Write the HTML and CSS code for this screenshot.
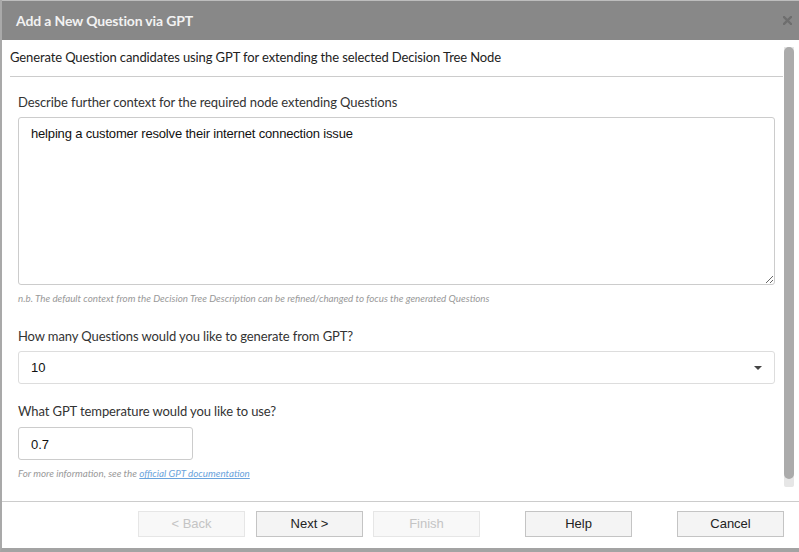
FILE: index.html
```html
<!DOCTYPE html>
<html>
<head>
<link rel="stylesheet" href="styles.css">
</head>
<body>

<div class="dialog">
  <div class="dialog-title">
    <span class="title-text">Add a New Question via GPT</span>
    <svg class="close-icon" width="9" height="9" viewBox="0 0 9 9">
      <path d="M1 1 L8 8 M8 1 L1 8" stroke="#6e6e6e" stroke-width="2.4" stroke-linecap="square"/>
    </svg>
  </div>

  <div class="dialog-main">
    <div class="dialog-content">
      <div class="step-header">Generate Question candidates using GPT for extending the selected Decision Tree Node</div>

      <div class="form">
        <div class="field-label first">Describe further context for the required node extending Questions</div>
        <textarea class="context-box">helping a customer resolve their internet connection issue</textarea>
        <div class="hint">n.b. The default context from the Decision Tree Description can be refined/changed to focus the generated Questions</div>

        <div class="field-label">How many Questions would you like to generate from GPT?</div>
        <div class="select-box">
          <span>10</span>
          <span class="caret"></span>
        </div>

        <div class="field-label temp">What GPT temperature would you like to use?</div>
        <input class="temp-input" type="text" value="0.7">
        <div class="hint info">For more information, see the <a href="#">official GPT documentation</a></div>
      </div>
    </div>

    <div class="scrollbar">
      <div class="scroll-thumb"></div>
    </div>
  </div>

  <div class="dialog-footer">
    <button class="btn disabled back">&lt; Back</button>
    <button class="btn next">Next &gt;</button>
    <button class="btn disabled">Finish</button>
    <button class="btn help">Help</button>
    <button class="btn cancel">Cancel</button>
  </div>
</div>

</body>
</html>
```

FILE: styles.css
```css
body {
  margin: 0;
  background-color: #fff;
}

.dialog {
  width: 797px;
  height: 548px;
  border-left: 2px solid #a9a9a9;
  border-bottom: 4px solid #a3a3a3;
  display: flex;
  flex-direction: column;
  font-family: Lato, "Liberation Sans", sans-serif;
  background-color: #fff;
}

.dialog-title {
  height: 39px;
  border-top: 1px solid #bdbdbd;
  background-color: #888;
  display: flex;
  align-items: center;
  justify-content: space-between;
  padding: 0 7px 0 14px;
}

.title-text {
  color: #f2f2f2;
  font-weight: bold;
  font-size: 14px;
  letter-spacing: -0.15px;
}

.dialog-main {
  height: 461px;
  display: flex;
}

.dialog-content {
  width: 773px;
  padding-left: 8px;
}

.step-header {
  font-size: 13px;
  line-height: 16px;
  letter-spacing: -0.12px;
  color: #222;
  padding: 9px 0 11px;
  border-bottom: 1px solid #ccc;
}

.form {
  padding: 0 8px;
}

.field-label {
  font-size: 13px;
  line-height: 16px;
  letter-spacing: -0.1px;
  color: #333;
  margin: 24px 0 7px;
}

.field-label.first {
  margin-top: 17px;
}

.field-label.temp {
  margin-top: 19px;
  margin-bottom: 8px;
}

.context-box {
  display: block;
  box-sizing: border-box;
  width: 757px;
  height: 168px;
  margin: 0;
  padding: 8px 12px;
  border: 1px solid #ccc;
  border-radius: 3px;
  font-family: "Liberation Sans", Arial, sans-serif;
  font-size: 13px;
  line-height: 16px;
  letter-spacing: -0.17px;
  color: #111;
  resize: vertical;
  outline: none;
}

.hint {
  font-size: 9.8px;
  font-style: italic;
  line-height: 12px;
  color: #999;
  margin-top: 7px;
}

.hint a {
  color: #6aa3dc;
}

.select-box {
  box-sizing: border-box;
  height: 33px;
  border: 1px solid #ddd;
  border-radius: 3px;
  display: flex;
  align-items: center;
  justify-content: space-between;
  padding: 0 12px 0 12px;
  font-family: "Liberation Sans", Arial, sans-serif;
  font-size: 13px;
  color: #111;
}

.caret {
  width: 0;
  height: 0;
  border-left: 4px solid transparent;
  border-right: 4px solid transparent;
  border-top: 4px solid #444;
  margin-top: 1px;
}

.temp-input {
  display: block;
  box-sizing: border-box;
  width: 175px;
  height: 33px;
  margin: 0;
  padding: 2px 12px 0;
  border: 1px solid #ccc;
  border-radius: 3px;
  font-family: "Liberation Sans", Arial, sans-serif;
  font-size: 13px;
  color: #111;
  outline: none;
}

.hint.info {
  margin-top: 7px;
}

.scrollbar {
  width: 10px;
  margin: 7px 0 0 1px;
  height: 440px;
  background-color: #e6e6e6;
  border-radius: 0 0 2px 2px;
}

.scroll-thumb {
  height: 432px;
  background-color: #ababab;
  border-radius: 5px;
}

.dialog-footer {
  flex: 1;
  border-top: 1px solid #ccc;
  display: flex;
  align-items: flex-start;
  padding: 9px 0 0 136px;
}

.btn {
  box-sizing: border-box;
  width: 107px;
  height: 26px;
  margin-right: 10px;
  background-color: #f4f4f4;
  border: 1px solid #c4c4c4;
  font-family: "Liberation Sans", Arial, sans-serif;
  font-size: 13px;
  color: #222;
  padding: 0 0 1px;
}

.btn.back {
  margin-right: 11px;
}

.btn.disabled {
  border-color: #e6e6e6;
  color: #c4c4c4;
  background-color: #f8f8f8;
}

.btn.help {
  margin-left: 35px;
  margin-right: 45px;
}
```
